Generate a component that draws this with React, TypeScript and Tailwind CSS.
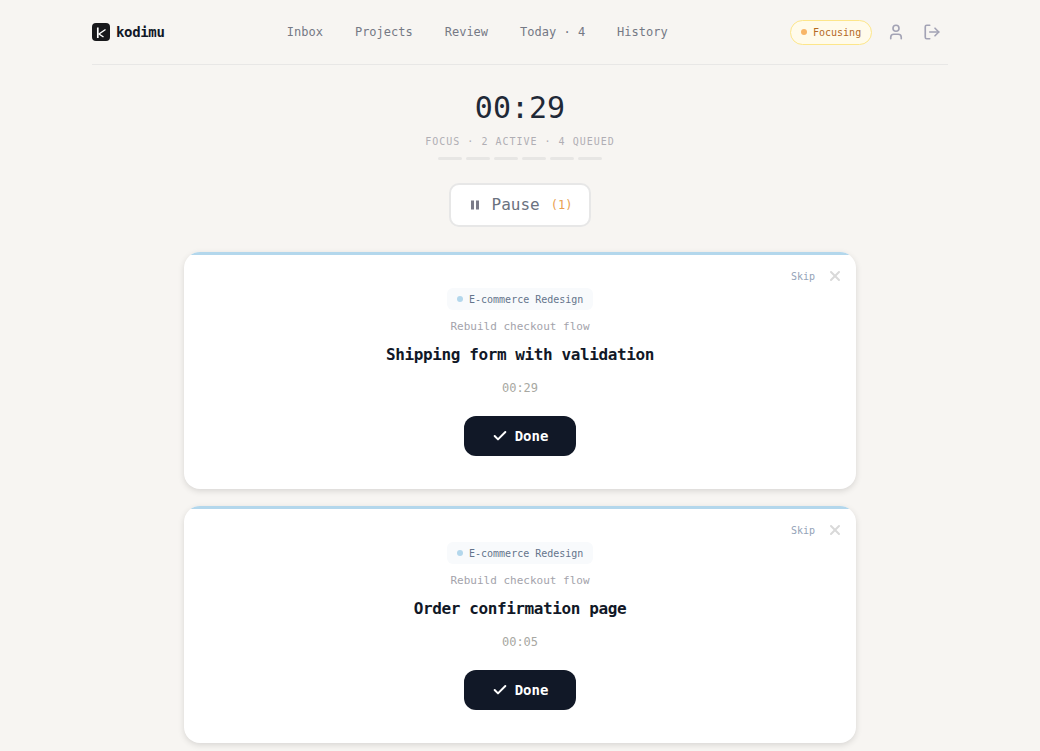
import { Check, LogOut, User, X } from "lucide-react";

const font = "font-['DejaVu_Sans_Mono','Liberation_Mono',monospace]";

const navItems = ["Inbox", "Projects", "Review", "Today · 4", "History"];

function Logo() {
  return (
    <div className="flex items-center gap-[6px]">
      <svg width="18" height="18" viewBox="0 0 18 18">
        <rect width="18" height="18" rx="4" fill="#18181b" />
        <path d="M5.8 4.5V15" stroke="#fff" strokeWidth="1.7" fill="none" />
        <path d="M13.5 6.5L7 11L11.5 14" stroke="#fff" strokeWidth="1.4" fill="none" />
      </svg>
      <span className="text-sm font-bold tracking-tight text-[#111827]">kodimu</span>
    </div>
  );
}

function Header() {
  return (
    <header className="flex h-[65px] items-center justify-between border-b border-[#e8e7e6]">
      <Logo />
      <nav className="flex items-center gap-8 text-xs text-[#757985]">
        {navItems.map((item) => (
          <span key={item}>{item}</span>
        ))}
      </nav>
      <div className="flex items-center">
        <div className="mr-2 flex h-[25px] w-[82px] items-center gap-[6px] rounded-full border border-[#fde68a] bg-[#fffbeb] pl-[10px] text-[10px] text-[#b4691f]">
          <span className="size-[6px] rounded-full bg-[#f8b668]" />
          Focusing
        </div>
        <button className="p-[7px] text-[#a3a3b5]">
          <User size={18} strokeWidth={2.2} />
        </button>
        <button className="ml-1 p-[7px] text-[#a3a3b5]">
          <LogOut size={18} strokeWidth={2.2} />
        </button>
      </div>
    </header>
  );
}

function Timer() {
  return (
    <section className="flex flex-col items-center pt-[22px]">
      <div className="text-3xl leading-[42px] text-[#1f2937]">00:29</div>
      <div className="mt-[6px] text-[10px] leading-[14px] tracking-[1px] text-[#b0aeb4]">
        FOCUS · 2 ACTIVE · 4 QUEUED
      </div>
      <div className="mt-[8px] flex gap-1">
        {[0, 1, 2, 3, 4, 5].map((i) => (
          <span key={i} className="h-[3px] w-6 rounded-full bg-[#e7e6e4]" />
        ))}
      </div>
      <button className="mt-[23px] flex h-11 w-[142px] items-center justify-center rounded-[10px] border-2 border-[#e7e7e7] bg-white text-base text-[#6b7280]">
        <svg width="14" height="14" viewBox="0 0 14 14" fill="#7b7b88" className="ml-[2px]">
          <rect x="3" y="2.5" width="3" height="9" />
          <rect x="8" y="2.5" width="3" height="9" />
        </svg>
        <span className="ml-[10px]">Pause</span>
        <span className="mr-[2px] ml-[11px] text-xs text-[#e9a050]">(1)</span>
      </button>
    </section>
  );
}

function TaskCard({ title, time }: { title: string; time: string }) {
  return (
    <div className="relative flex h-[237px] flex-col items-center overflow-hidden rounded-2xl bg-white pt-9 shadow-[0_2px_6px_rgba(0,0,0,0.13)]">
      <span className="absolute inset-x-0 top-0 h-[3px] bg-[#b3d7ec]" />
      <div className="absolute top-4 right-[13px] flex items-center gap-3">
        <span className="text-[10px] text-[#94a3b8]">Skip</span>
        <X size={16} strokeWidth={3} className="text-[#d9d9d9]" />
      </div>
      <div className="flex h-[22px] w-[146px] items-center gap-[6px] rounded-md bg-[#f8fafc] pl-[10px] text-[10px] text-[#64748b]">
        <span className="size-[6px] rounded-full bg-[#b3d7ec]" />
        E-commerce Redesign
      </div>
      <div className="mt-[9px] text-[11px] leading-4 text-[#a3a3ab]">Rebuild checkout flow</div>
      <h2 className="mt-[8px] text-base leading-6 font-semibold tracking-tight text-[#111827]">
        {title}
      </h2>
      <div className="mt-[13px] text-xs leading-4 text-[#a8a8a2]">{time}</div>
      <button className="mt-5 flex h-10 w-28 items-center justify-center gap-[7px] rounded-xl bg-[#111827] text-sm font-bold text-white">
        <Check size={16} strokeWidth={3} />
        Done
      </button>
    </div>
  );
}

export default function App() {
  return (
    <div className={`${font} h-[751px] overflow-hidden bg-[#f7f5f2] px-[92px]`}>
      <Header />
      <Timer />
      <main className="mx-auto mt-[25px] flex w-[672px] flex-col gap-[17px]">
        <TaskCard title="Shipping form with validation" time="00:29" />
        <TaskCard title="Order confirmation page" time="00:05" />
      </main>
    </div>
  );
}
